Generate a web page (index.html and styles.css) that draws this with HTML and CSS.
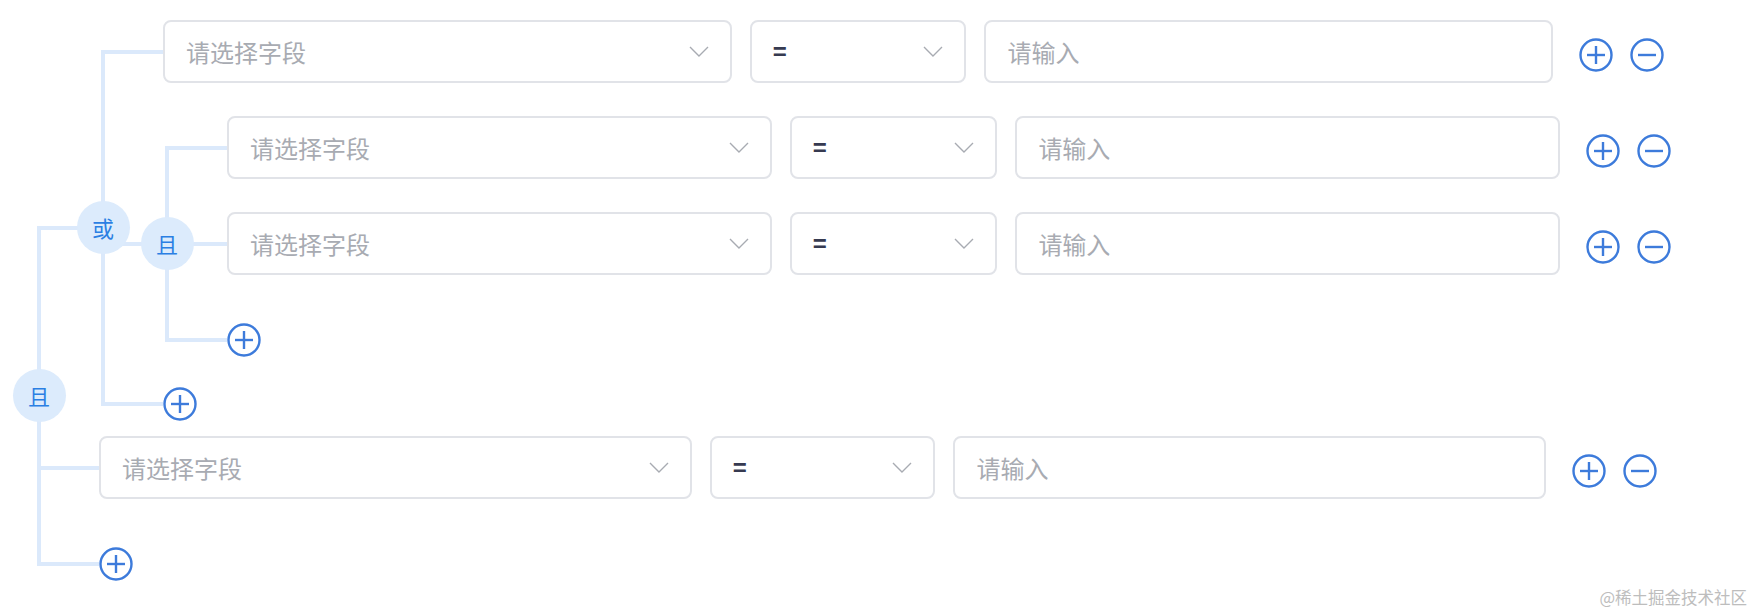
FILE: index.html
```html
<!DOCTYPE html>
<html lang="zh-CN">
<head>
<meta charset="utf-8">
<title>条件编辑器</title>
<link rel="stylesheet" href="styles.css">
</head>
<body>
<div class="page">
  <div class="group group--root">
    <div class="rail"><span class="badge">且</span></div>
    <div class="children">

      <div class="item group">
        <div class="rail"><span class="badge">或</span></div>
        <div class="children">
          <div class="item row">
            <div class="fields">
              <div class="box"><span class="placeholder">请选择字段</span><svg class="chev" viewBox="0 0 20 11"><polyline points="1,1 10,10 19,1"/></svg></div>
              <div class="box"><span class="value">=</span><svg class="chev" viewBox="0 0 20 11"><polyline points="1,1 10,10 19,1"/></svg></div>
              <div class="box"><span class="placeholder">请输入</span></div>
            </div>
            <div class="ops">
              <svg class="icon" viewBox="0 0 34 34"><circle cx="17" cy="17" r="15.5"/><line x1="8" y1="17" x2="26" y2="17"/><line x1="17" y1="8" x2="17" y2="26"/></svg>
              <svg class="icon" viewBox="0 0 34 34"><circle cx="17" cy="17" r="15.5"/><line x1="8" y1="17" x2="26" y2="17"/></svg>
            </div>
          </div>

          <div class="item group">
            <div class="rail"><span class="badge">且</span></div>
            <div class="children">
              <div class="item row">
                <div class="fields">
                  <div class="box"><span class="placeholder">请选择字段</span><svg class="chev" viewBox="0 0 20 11"><polyline points="1,1 10,10 19,1"/></svg></div>
                  <div class="box"><span class="value">=</span><svg class="chev" viewBox="0 0 20 11"><polyline points="1,1 10,10 19,1"/></svg></div>
                  <div class="box"><span class="placeholder">请输入</span></div>
                </div>
                <div class="ops">
                  <svg class="icon" viewBox="0 0 34 34"><circle cx="17" cy="17" r="15.5"/><line x1="8" y1="17" x2="26" y2="17"/><line x1="17" y1="8" x2="17" y2="26"/></svg>
                  <svg class="icon" viewBox="0 0 34 34"><circle cx="17" cy="17" r="15.5"/><line x1="8" y1="17" x2="26" y2="17"/></svg>
                </div>
              </div>
              <div class="item row">
                <div class="fields">
                  <div class="box"><span class="placeholder">请选择字段</span><svg class="chev" viewBox="0 0 20 11"><polyline points="1,1 10,10 19,1"/></svg></div>
                  <div class="box"><span class="value">=</span><svg class="chev" viewBox="0 0 20 11"><polyline points="1,1 10,10 19,1"/></svg></div>
                  <div class="box"><span class="placeholder">请输入</span></div>
                </div>
                <div class="ops">
                  <svg class="icon" viewBox="0 0 34 34"><circle cx="17" cy="17" r="15.5"/><line x1="8" y1="17" x2="26" y2="17"/><line x1="17" y1="8" x2="17" y2="26"/></svg>
                  <svg class="icon" viewBox="0 0 34 34"><circle cx="17" cy="17" r="15.5"/><line x1="8" y1="17" x2="26" y2="17"/></svg>
                </div>
              </div>
              <div class="item add">
                <svg class="icon" viewBox="0 0 34 34"><circle cx="17" cy="17" r="15.5"/><line x1="8" y1="17" x2="26" y2="17"/><line x1="17" y1="8" x2="17" y2="26"/></svg>
              </div>
            </div>
          </div>

          <div class="item add">
            <svg class="icon" viewBox="0 0 34 34"><circle cx="17" cy="17" r="15.5"/><line x1="8" y1="17" x2="26" y2="17"/><line x1="17" y1="8" x2="17" y2="26"/></svg>
          </div>
        </div>
      </div>

      <div class="item row">
        <div class="fields">
          <div class="box"><span class="placeholder">请选择字段</span><svg class="chev" viewBox="0 0 20 11"><polyline points="1,1 10,10 19,1"/></svg></div>
          <div class="box"><span class="value">=</span><svg class="chev" viewBox="0 0 20 11"><polyline points="1,1 10,10 19,1"/></svg></div>
          <div class="box"><span class="placeholder">请输入</span></div>
        </div>
        <div class="ops">
          <svg class="icon" viewBox="0 0 34 34"><circle cx="17" cy="17" r="15.5"/><line x1="8" y1="17" x2="26" y2="17"/><line x1="17" y1="8" x2="17" y2="26"/></svg>
          <svg class="icon" viewBox="0 0 34 34"><circle cx="17" cy="17" r="15.5"/><line x1="8" y1="17" x2="26" y2="17"/></svg>
        </div>
      </div>

      <div class="item add">
        <svg class="icon" viewBox="0 0 34 34"><circle cx="17" cy="17" r="15.5"/><line x1="8" y1="17" x2="26" y2="17"/><line x1="17" y1="8" x2="17" y2="26"/></svg>
      </div>

    </div>
  </div>
  <div class="watermark">@稀土掘金技术社区</div>
</div>
</body>
</html>
```

FILE: styles.css
```css
html, body {
  margin: 0;
  padding: 0;
  background: #ffffff;
}

body {
  font-family: "Noto Sans CJK SC", "Noto Sans", sans-serif;
  width: 1756px;
  height: 616px;
  overflow: hidden;
}

.page {
  position: relative;
  height: 616px;
  box-sizing: border-box;
  padding: 20px 31px 0 35px;
}

/* ---------- tree ---------- */
.group {
  position: relative;
  padding-left: 64px;
}

.children {
  display: flex;
  flex-direction: column;
}

.item {
  position: relative;
}

/* horizontal connector from the parent rail to the item */
.item::before {
  content: "";
  position: absolute;
  left: -62px;
  width: 62px;
  top: calc(50% - 2px);
  height: 4px;
  background: #dbe9fb;
}

.item.group {
  margin-bottom: 1px;
}

.rail {
  position: absolute;
  left: 2px;
  width: 4px;
  top: 29.5px;
  bottom: 29.5px;
  background: #dbe9fb;
  display: flex;
  align-items: center;
  justify-content: center;
  z-index: 1;
}

.group--root > .rail {
  top: 206px;
}

.badge {
  flex: 0 0 auto;
  width: 53px;
  height: 53px;
  border-radius: 50%;
  background: #dcebfc;
  color: #2b7fe3;
  font-size: 22px;
  line-height: 53px;
  text-align: center;
}

/* ---------- condition row ---------- */
.row {
  height: 63px;
  margin-bottom: 33px;
  display: flex;
  align-items: center;
}

.fields {
  width: 89%;
  height: 100%;
  display: grid;
  grid-template-columns: minmax(0, 42fr) minmax(0, 16fr) minmax(0, 42fr);
  column-gap: 18px;
}

.box {
  box-sizing: border-box;
  height: 100%;
  border: 2px solid #e1e3e8;
  border-radius: 8px;
  background: #fff;
  display: flex;
  align-items: center;
  justify-content: space-between;
  padding: 0 21px;
  font-size: 24px;
  min-width: 0;
}

.placeholder {
  color: #a8abb2;
}

.value {
  color: #363a50;
  font-family: "Liberation Sans", sans-serif;
  font-weight: 700;
}

.chev {
  width: 20px;
  height: 11px;
  fill: none;
  stroke: #a8abb2;
  stroke-width: 1.4;
}

.ops {
  display: flex;
  gap: 17px;
  margin-left: 26px;
  margin-top: 7px;
}

.icon {
  display: block;
  width: 34px;
  height: 34px;
  fill: none;
  stroke: #3d7bdb;
  stroke-width: 2.4;
}

/* ---------- add button ---------- */
.add {
  height: 63px;
  display: flex;
  align-items: center;
}

/* ---------- watermark ---------- */
.watermark {
  position: absolute;
  right: 9px;
  bottom: 7px;
  font-size: 16.5px;
  color: #bdbdbd;
  white-space: nowrap;
}
```
